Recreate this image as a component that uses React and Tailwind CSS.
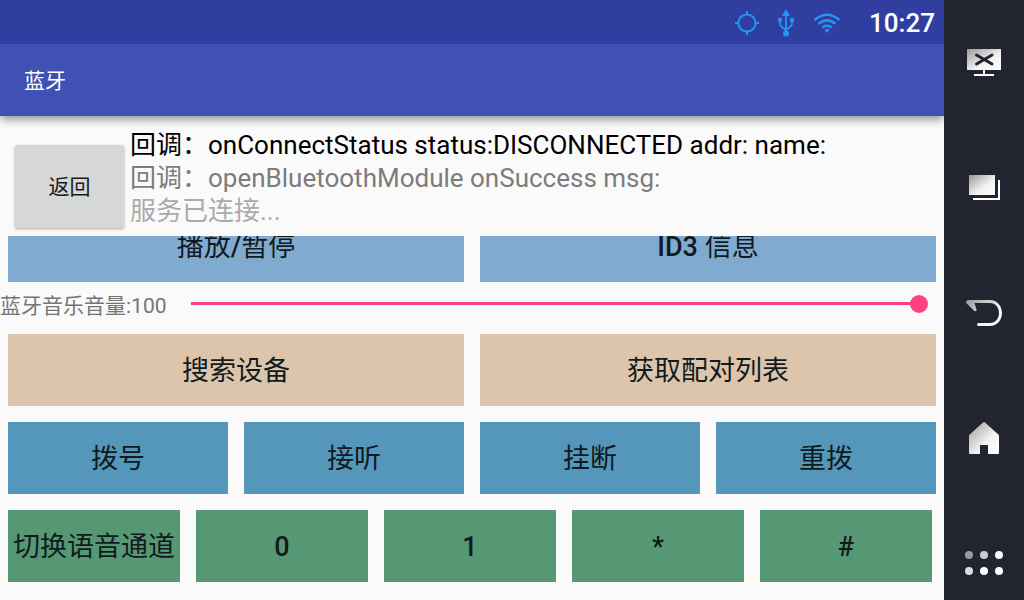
import { useState } from "react";

const padBase = "h-[72px] w-full pt-0.5 text-[27px] leading-8 text-[#111a1e] whitespace-nowrap";

function PadButton({ tone, children }) {
  return (
    <button type="button" className={`${padBase} ${tone}`}>
      {children}
    </button>
  );
}

function Latin({ children }) {
  return <span className="font-medium">{children}</span>;
}

function Shine({ id }) {
  return (
    <defs>
      <linearGradient id={id} x1="0" y1="0" x2="1" y2="1">
        <stop offset="0" stopColor="#999" />
        <stop offset="0.6" stopColor="#f2f2f2" />
        <stop offset="1" stopColor="#fff" />
      </linearGradient>
    </defs>
  );
}

function NavButton({ label, children }) {
  return (
    <button type="button" aria-label={label} className="size-[50px]">
      <svg viewBox="0 0 50 50" className="size-full" fill="none" aria-hidden="true">
        {children}
      </svg>
    </button>
  );
}

function StatusIcons() {
  return (
    <>
      <svg width="24" height="24" viewBox="0 0 24 24" fill="none" stroke="#2196f3" strokeWidth="2" aria-hidden="true">
        <circle cx="12" cy="12" r="8.6" />
        <path d="M12 0v4M12 20v4M0 12h4M20 12h4" />
      </svg>
      <svg width="18" height="28" viewBox="0 0 18 28" fill="none" stroke="#2196f3" strokeWidth="1.8" aria-hidden="true">
        <path d="M9 5v18M3 12v3q0 2 6 6M15 12v3q0 2-6 6" />
        <path d="M9 0l4 7H5z" fill="#2196f3" stroke="none" />
        <circle cx="3" cy="11" r="2.2" fill="#2196f3" stroke="none" />
        <path d="M13 9h4v4h-4z" fill="#2196f3" stroke="none" />
        <circle cx="9" cy="24.5" r="3" fill="#2196f3" stroke="none" />
      </svg>
      <svg width="28" height="20" viewBox="0 0 28 20" fill="none" stroke="#2196f3" strokeWidth="2.6" aria-hidden="true">
        <path d="M1.5 7Q14-3.500 26.500 7" />
        <path d="M5.500 10.800Q14 3.800 22.500 10.800" />
        <path d="M9.500 14.500Q14 11 18.500 14.500" />
        <path d="M11.500 17q2.500-1.800 5 0L14 20z" fill="#2196f3" stroke="none" />
      </svg>
    </>
  );
}

export default function App() {
  const [volume, setVolume] = useState(100);
  return (
    <div className="flex h-screen overflow-hidden bg-[#fafafa] font-['Roboto','Noto_Sans_CJK_SC',sans-serif]">
      <div className="flex min-w-0 flex-1 flex-col overflow-hidden">
        <div className="z-20 flex h-11 shrink-0 items-center justify-end bg-[#303f9f] pr-[9px] pt-0.5">
          <div className="flex items-center gap-[18px]">
            <StatusIcons />
          </div>
          <time className="ml-7 text-[26px] font-medium leading-8 text-white">10:27</time>
        </div>
        <header className="z-10 flex h-[72px] shrink-0 items-center bg-[#3f51b5] px-6 pt-0.5 shadow-[0_3px_9px_rgba(0,0,0,0.45)]">
          <h1 className="text-[21px] leading-8 text-white">蓝牙</h1>
        </header>

        <section className="flex h-[120px] shrink-0 items-start gap-[6px] pl-[15px] pt-[13px]">
          <button
            type="button"
            className="mt-4 h-[83px] w-[109px] shrink-0 rounded-[3px] bg-[#d6d7d7] pt-0.5 text-[21px] text-[#1b1b1b] shadow-[0_1px_3px_rgba(0,0,0,0.35)]"
          >
            返回
          </button>
          <div className="min-w-0 text-[26px] leading-[33px]">
            <p className="text-black">回调：onConnectStatus status:DISCONNECTED addr: name:</p>
            <p className="text-[#7c7c7c]">回调：openBluetoothModule onSuccess msg:</p>
            <p className="text-[#aaaaaa]">服务已连接...</p>
          </div>
        </section>

        <main className="min-h-0 flex-1 overflow-hidden">
          <div className="flex h-[46px] items-end gap-4 overflow-hidden px-2">
            <PadButton tone="bg-[#80aacf]">
              播放<Latin>/</Latin>暂停
            </PadButton>
            <PadButton tone="bg-[#80aacf]">
              <Latin>ID3</Latin> 信息
            </PadButton>
          </div>

          <div className="flex h-[52px] items-start pr-4 pt-[10px]">
            <label htmlFor="volume" className="w-[191px] shrink-0 text-[21px] leading-7 text-[#757575]">
              蓝牙音乐音量:{volume}
            </label>
            <input
              id="volume"
              type="range"
              min="0"
              max="100"
              value={volume}
              onChange={(e) => setVolume(Number(e.target.value))}
              style={{ "--fill": `${volume}%` }}
              className="h-[23px] min-w-0 flex-1 cursor-pointer appearance-none bg-[linear-gradient(#ff4081,#ff4081)] bg-[length:calc(var(--fill)-9px)_3px] bg-left bg-no-repeat [&::-webkit-slider-thumb]:size-[18px] [&::-webkit-slider-thumb]:appearance-none [&::-webkit-slider-thumb]:rounded-full [&::-webkit-slider-thumb]:bg-[#ff4081]"
            />
          </div>

          <div className="flex flex-col gap-4 px-2">
            <div className="grid grid-cols-2 gap-4">
              <PadButton tone="bg-[#dcc5ab]">搜索设备</PadButton>
              <PadButton tone="bg-[#dcc5ab]">获取配对列表</PadButton>
            </div>
            <div className="grid grid-cols-4 gap-4">
              <PadButton tone="bg-[#5597bb]">拨号</PadButton>
              <PadButton tone="bg-[#5597bb]">接听</PadButton>
              <PadButton tone="bg-[#5597bb]">挂断</PadButton>
              <PadButton tone="bg-[#5597bb]">重拨</PadButton>
            </div>
            <div className="grid grid-cols-5 gap-4 pr-1">
              <PadButton tone="bg-[#569873]">切换语音通道</PadButton>
              <PadButton tone="bg-[#569873]"><Latin>0</Latin></PadButton>
              <PadButton tone="bg-[#569873]"><Latin>1</Latin></PadButton>
              <PadButton tone="bg-[#569873]"><Latin>*</Latin></PadButton>
              <PadButton tone="bg-[#569873]"><Latin>#</Latin></PadButton>
            </div>
          </div>
        </main>
      </div>

      <nav className="flex w-20 shrink-0 flex-col items-center justify-between bg-[#22252f] pb-3 pt-[38px]">
        <NavButton label="Screen off">
          <Shine id="shine-screen" />
          <path d="M8 11h34v21H8z" fill="url(#shine-screen)" />
          <path d="M24 32h2v4h9v2H15v-2h9z" fill="#fff" />
          <path d="M17.500 17L33 26M33 17l-15.500 9" stroke="#22252f" strokeWidth="3" strokeLinecap="round" />
        </NavButton>
        <NavButton label="Recent apps">
          <Shine id="shine-recent" />
          <path d="M10 12h26v20H10z" fill="url(#shine-recent)" />
          <path d="M39 17h2v20H14v-2h25z" fill="#fff" />
        </NavButton>
        <NavButton label="Back">
          <Shine id="shine-back" />
          <path
            d="M9.500 12H31C38 12 43 18 43 25S38 38 31 38H19.500a1.500 1.500 0 0 1 0-3H31C36.500 35 40 30.500 40 25S36.500 15 31 15H15.500l2 6.500c.3 1.500-1.200 2.300-2.300 1.200L7.700 15.500C6.500 14.300 7.300 12 9.500 12z"
            fill="url(#shine-back)"
          />
        </NavButton>
        <NavButton label="Home">
          <Shine id="shine-home" />
          <path
            d="M24 9.500q1-.9 2 0L39.300 21.500q.7.700.7 1.500v17q0 1-1 1H29v-9h-8v9H11q-1 0-1-1V23q0-.8.700-1.500z"
            fill="url(#shine-home)"
          />
        </NavButton>
        <NavButton label="All apps">
          <circle cx="10" cy="17" r="4" fill="#9b9b9b" />
          <circle cx="25" cy="17" r="4" fill="#cbcbcb" />
          <circle cx="40" cy="17" r="4" fill="#fafafa" />
          <circle cx="10" cy="33" r="4" fill="#dcdcdc" />
          <circle cx="25" cy="33" r="4" fill="#fff" />
          <circle cx="40" cy="33" r="4" fill="#fff" />
        </NavButton>
      </nav>
    </div>
  );
}
